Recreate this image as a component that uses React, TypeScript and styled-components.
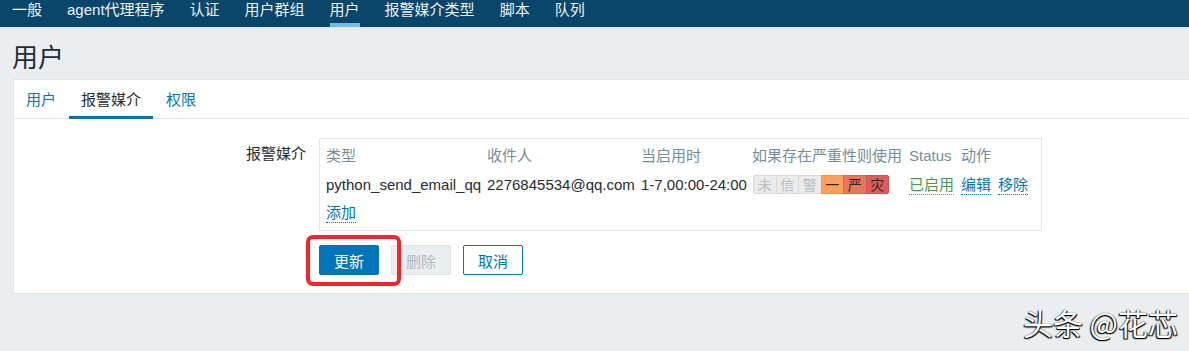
import React from "react";
import styled, { createGlobalStyle } from "styled-components";

const GlobalStyle = createGlobalStyle`
  html, body {
    margin: 0;
    padding: 0;
  }
  body {
    background: #ebeef0;
    font-family: "Liberation Sans", "Noto Sans CJK SC", sans-serif;
    font-size: 15px;
    color: #1f2c33;
    overflow: hidden;
  }
`;

const Page = styled.div`
  position: relative;
  min-height: 351px;
`;

// top navigation
const TopNav = styled.nav`
  display: flex;
  gap: 25px;
  padding: 0 12px;
  height: 27px;
  background: #0a466a;
  box-shadow: 0 1px 0 #d9e5ec;
`;

const NavItem = styled.a<{ $active?: boolean }>`
  box-sizing: border-box;
  height: 27px;
  line-height: 20px;
  padding-bottom: 3px;
  color: #eef2f5;
  white-space: nowrap;
  border-bottom: 4px solid ${(p) => (p.$active ? "#74bbe6" : "transparent")};
`;

const Title = styled.h1`
  margin: 0;
  padding: 16px 12px 6px;
  font-size: 26px;
  line-height: 30px;
  font-weight: normal;
  color: #1f2c33;
`;

const Card = styled.section`
  margin-left: 13px;
  background: #fff;
  border: 1px solid #dfe4e7;
  border-right: 0;
  padding-bottom: 18px;
`;

const TabBar = styled.div`
  display: flex;
  border-bottom: 1px solid #e6e9eb;
`;

const Tab = styled.a<{ $active?: boolean }>`
  padding: 4px 12px 0;
  margin: 0 1px -1px 0;
  line-height: 32px;
  color: ${(p) => (p.$active ? "#1f2c33" : "#0275b8")};
  border-bottom: 3px solid ${(p) => (p.$active ? "#0275b8" : "transparent")};
`;

const FormRow = styled.div`
  display: flex;
  align-items: flex-start;
  gap: 13px;
  padding-top: 19px;
`;

const FieldLabel = styled.label`
  width: 292px;
  padding-top: 6px;
  line-height: 20px;
  text-align: right;
`;

const FieldBody = styled.div`
  display: flex;
  flex-direction: column;
`;

const TableBox = styled.div`
  box-sizing: border-box;
  width: 723px;
  border: 1px solid #e3e7ea;
  padding: 3px 6px 4px;
`;

const MediaGrid = styled.div`
  display: grid;
  grid-template-columns: 161px 154px 111px 157px 52px 1fr;
  align-items: center;
`;

const HeadCell = styled.div`
  height: 28px;
  line-height: 28px;
  color: #768d99;
  white-space: nowrap;
`;

const Cell = styled.div<{ $wide?: boolean }>`
  display: flex;
  align-items: center;
  gap: 7px;
  height: 28px;
  white-space: nowrap;
  grid-column: ${(p) => (p.$wide ? "1 / -1" : "auto")};
`;

const Link = styled.a<{ $tone?: "green" | "blue" }>`
  line-height: normal;
  color: ${(p) => (p.$tone === "green" ? "#429e47" : "#0275b8")};
  border-bottom: 1px dotted currentColor;
`;

const SevBar = styled.div`
  display: flex;
  margin-left: 1px;
`;

const SevCell = styled.span<{ $bg: string; $fg: string; $line: string }>`
  box-sizing: border-box;
  width: 23.5px;
  height: 19px;
  margin-left: -1px;
  display: flex;
  align-items: center;
  justify-content: center;
  font-size: 14px;
  background: ${(p) => p.$bg};
  color: ${(p) => p.$fg};
  border: 1px solid ${(p) => p.$line};
  &:first-child {
    margin-left: 0;
    border-radius: 2px 0 0 2px;
  }
  &:last-child {
    border-radius: 0 2px 2px 0;
  }
`;

const ButtonRow = styled.div`
  display: flex;
  gap: 12px;
  margin-top: 14px;
`;

const Button = styled.button<{ $kind: "primary" | "disabled" | "outline" }>`
  box-sizing: border-box;
  height: 30px;
  padding: 0 14px;
  font: inherit;
  border-radius: 2px;
  border: 1px solid
    ${(p) =>
      p.$kind === "primary" ? "#0275b8" : p.$kind === "disabled" ? "#dfe4e7" : "#0275b8"};
  background: ${(p) =>
    p.$kind === "primary" ? "#0275b8" : p.$kind === "disabled" ? "#ebeef0" : "#fff"};
  color: ${(p) =>
    p.$kind === "primary" ? "#fff" : p.$kind === "disabled" ? "#acbbc2" : "#0275b8"};
`;

// red annotation frame drawn over the update button
const Highlight = styled.span`
  position: relative;
  display: inline-flex;
  &::after {
    content: "";
    position: absolute;
    left: -13px;
    top: -10px;
    right: -22px;
    bottom: -11px;
    border: 4px solid #f2262a;
    border-radius: 7px;
    z-index: 1;
    pointer-events: none;
  }
`;

const Watermark = styled.div`
  position: absolute;
  right: 11px;
  top: 303px;
  font-family: "Noto Sans CJK SC", sans-serif;
  font-size: 30px;
  line-height: 38px;
  color: #fff;
  text-shadow: -1px 1px 1px #000, 1px 1px 1px #000, 0 0 1px #222;
  white-space: nowrap;
`;

const navItems = ["一般", "agent代理程序", "认证", "用户群组", "用户", "报警媒介类型", "脚本", "队列"];

const severities = [
  { label: "未", bg: "#ebebeb", fg: "#b9bec1", line: "#d6d9db" },
  { label: "信", bg: "#ebebeb", fg: "#b9bec1", line: "#d6d9db" },
  { label: "警", bg: "#ebebeb", fg: "#b9bec1", line: "#d6d9db" },
  { label: "一", bg: "#ffa059", fg: "#1f2c33", line: "#f09550" },
  { label: "严", bg: "#e97659", fg: "#1f2c33", line: "#dc6a4e" },
  { label: "灾", bg: "#e45959", fg: "#1f2c33", line: "#d54f4f" },
];

const App = () => {
  return (
    <Page>
      <GlobalStyle />
      <TopNav>
        {navItems.map((item) => (
          <NavItem key={item} $active={item === "用户"}>
            {item}
          </NavItem>
        ))}
      </TopNav>
      <Title>用户</Title>
      <Card>
        <TabBar>
          <Tab>用户</Tab>
          <Tab $active>报警媒介</Tab>
          <Tab>权限</Tab>
        </TabBar>
        <FormRow>
          <FieldLabel>报警媒介</FieldLabel>
          <FieldBody>
            <TableBox>
              <MediaGrid>
                <HeadCell>类型</HeadCell>
                <HeadCell>收件人</HeadCell>
                <HeadCell>当启用时</HeadCell>
                <HeadCell>如果存在严重性则使用</HeadCell>
                <HeadCell>Status</HeadCell>
                <HeadCell>动作</HeadCell>

                <Cell>python_send_email_qq</Cell>
                <Cell>2276845534@qq.com</Cell>
                <Cell>1-7,00:00-24:00</Cell>
                <Cell>
                  <SevBar>
                    {severities.map((s) => (
                      <SevCell key={s.label} $bg={s.bg} $fg={s.fg} $line={s.line}>
                        {s.label}
                      </SevCell>
                    ))}
                  </SevBar>
                </Cell>
                <Cell>
                  <Link $tone="green">已启用</Link>
                </Cell>
                <Cell>
                  <Link>编辑</Link>
                  <Link>移除</Link>
                </Cell>

                <Cell $wide>
                  <Link>添加</Link>
                </Cell>
              </MediaGrid>
            </TableBox>
            <ButtonRow>
              <Highlight>
                <Button $kind="primary">更新</Button>
              </Highlight>
              <Button $kind="disabled" disabled>
                删除
              </Button>
              <Button $kind="outline">取消</Button>
            </ButtonRow>
          </FieldBody>
        </FormRow>
      </Card>
      <Watermark>头条 @花芯</Watermark>
    </Page>
  );
};

export default App;
